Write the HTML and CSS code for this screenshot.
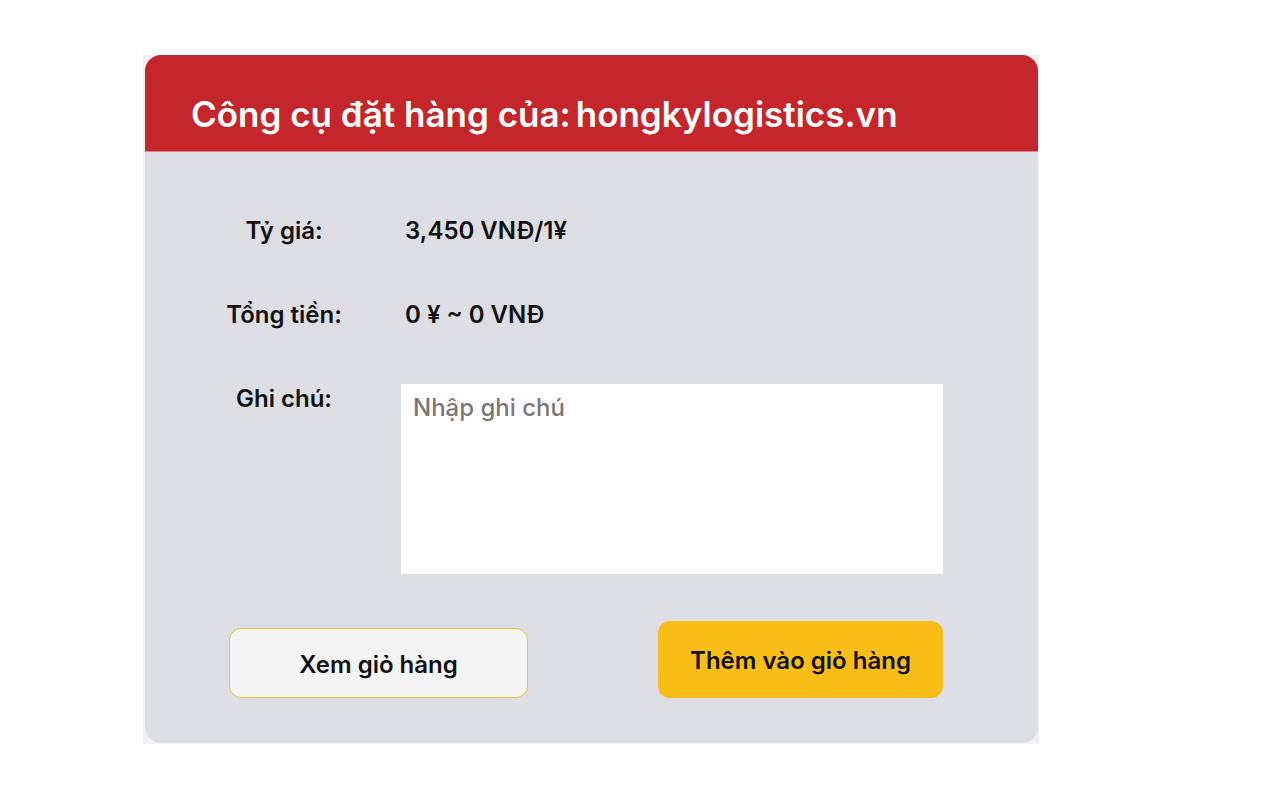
FILE: index.html
```html
<!DOCTYPE html>
<html lang="vi">
<head>
<meta charset="utf-8">
<link rel="stylesheet" href="styles.css">
</head>
<body>
<div class="page">
  <div class="frame">
    <div class="card">
      <div class="header">
        <h1 class="title">Công cụ đặt hàng của:<span class="site">hongkylogistics.vn</span></h1>
      </div>
      <div class="body">
        <div class="row">
          <div class="label">Tỷ giá:</div>
          <div class="value">3,450 VNĐ/1¥</div>
        </div>
        <div class="row">
          <div class="label">Tổng tiền:</div>
          <div class="value">0 ¥ ~ 0 VNĐ</div>
        </div>
        <div class="row row-note">
          <div class="label">Ghi chú:</div>
          <textarea class="note" placeholder="Nhập ghi chú"></textarea>
        </div>
        <div class="actions">
          <button class="btn btn-outline">Xem giỏ hàng</button>
          <button class="btn btn-primary">Thêm vào giỏ hàng</button>
        </div>
      </div>
    </div>
  </div>
</div>
</body>
</html>
```

FILE: styles.css
```css
html, body {
  margin: 0;
  padding: 0;
  background: #ffffff;
  font-family: Inter, "Noto Sans", sans-serif;
  color: #111111;
}

.page {
  padding: 55px 0 0 143px;
}

.frame {
  width: 896px;
  background: #f1f1f3;
  padding: 0 1px 1px 2px;
  box-sizing: border-box;
}

.card {
  width: 893px;
  border-radius: 16px;
  overflow: hidden;
  background: #dddee3;
}

.header {
  background: #c4262b;
  height: 97px;
  box-sizing: border-box;
  padding: 0 0 0 46px;
  display: flex;
  align-items: center;
  border-bottom: 1px solid #d98a8d;
}

.title {
  margin: 0;
  color: #ffffff;
  font-size: 35px;
  font-weight: 600;
  letter-spacing: 0;
  padding-top: 22px;
}

.site {
  margin-left: 5px;
}

.body {
  padding: 58px 95px 45px 39px;
}

.row {
  display: grid;
  grid-template-columns: 200px 1fr;
  column-gap: 17px;
  align-items: center;
  height: 40px;
  margin-bottom: 44px;
}

.row-note {
  height: auto;
  align-items: start;
  margin-top: 50px;
  margin-bottom: 47px;
}

.label {
  text-align: center;
  font-size: 24px;
  font-weight: 600;
}

.value {
  font-size: 24px;
  font-weight: 600;
  padding-left: 4px;
}

.note {
  display: block;
  width: 542px;
  height: 190px;
  box-sizing: border-box;
  border: none;
  outline: none;
  resize: none;
  background: #ffffff;
  padding: 9px 12px;
  font-family: Inter, "Noto Sans", sans-serif;
  font-size: 24px;
  font-weight: 500;
  color: #111;
}

.note::placeholder {
  color: #7b7777;
}

.actions {
  display: flex;
  justify-content: space-between;
  align-items: flex-end;
  padding-left: 45px;
}

.btn {
  font-family: Inter, "Noto Sans", sans-serif;
  font-size: 24px;
  font-weight: 600;
  color: #111111;
  border-radius: 12px;
  cursor: pointer;
}

.btn-outline {
  width: 299px;
  height: 70px;
  background: #f4f4f5;
  border: 1px solid #f3c032;
  padding-top: 3px;
}

.btn-primary {
  width: 285px;
  height: 77px;
  background: #f8be17;
  border: none;
  padding-top: 2px;
}
```
